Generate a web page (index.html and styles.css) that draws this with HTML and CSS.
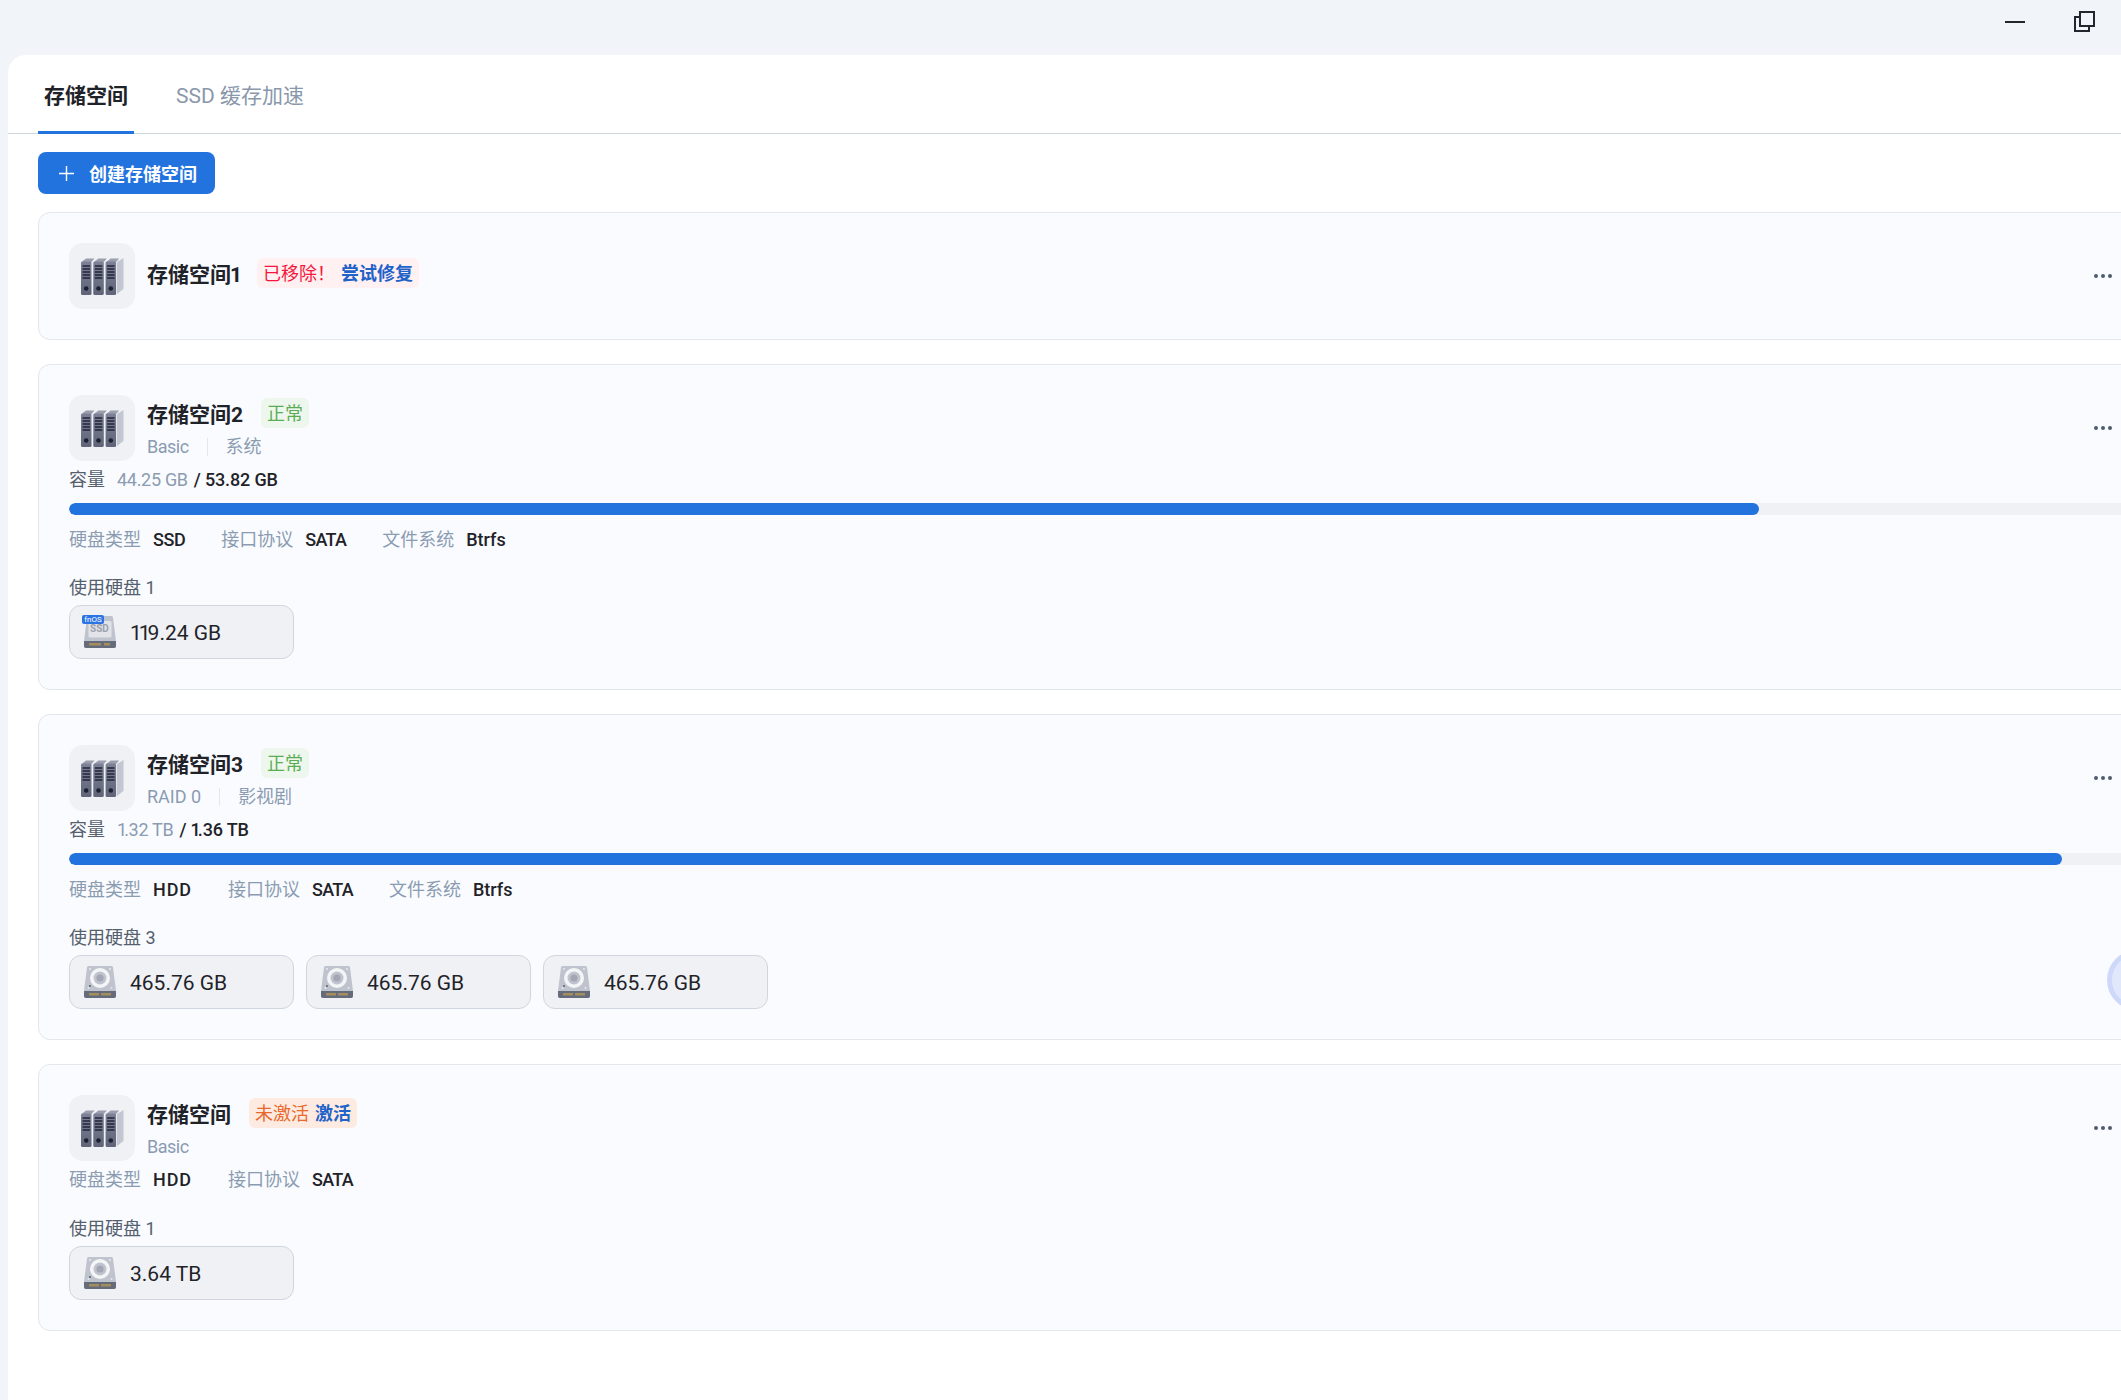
FILE: index.html
```html
<!DOCTYPE html>
<html lang="zh-CN">
<head>
<meta charset="utf-8">
<title>存储空间</title>
<link rel="stylesheet" href="styles.css">
</head>
<body>
<svg class="defs" width="0" height="0">
  <defs>
    <linearGradient id="binder" x1="0" y1="0" x2="0" y2="1"><stop offset="0" stop-color="#7d8296"/><stop offset="1" stop-color="#5f6478"/></linearGradient>
    <g id="one-binder">
      <path d="M0 6.5 5 2.5H13.5L10 6.5Z" fill="#9a9eae"/>
      <rect x="0" y="5.5" width="10.5" height="33.5" rx="1.5" fill="url(#binder)"/>
      <path d="M1.5 10h7.5M1.5 13h7.5M1.5 16h7.5M1.5 19h7.5M1.5 22h7.5" stroke="#23263a" stroke-width="1.5"/>
      <circle cx="5.2" cy="32.5" r="2.3" fill="#1d2030"/>
    </g>
    <symbol id="server" viewBox="0 0 43 40">
      <path d="M36 6 42.5 2V33L36 38Z" fill="#c3c7d1"/>
      <use href="#one-binder"/>
      <use href="#one-binder" x="12.3"/>
      <use href="#one-binder" x="24.6"/>
    </symbol>
    <symbol id="drive-base" viewBox="0 0 32 32">
      <path d="M3 1.5Q3 0 4.5 0H27.5Q29 0 29 1.5L32 25V30Q32 32 30 32H2Q0 32 0 30V25Z" fill="#bfc3cd"/>
      <path d="M0 25H32V30Q32 32 30 32H2Q0 32 0 30Z" fill="#666b7c"/>
    </symbol>
    <symbol id="hdd" viewBox="0 0 32 32">
      <use href="#drive-base" width="32" height="32"/>
      <circle cx="16" cy="12" r="10" fill="#f4f5f7"/>
      <circle cx="16" cy="12" r="6.5" fill="#bfc3cd"/>
      <circle cx="16" cy="12" r="3.6" fill="#a3a7b4"/>
      <circle cx="6" cy="20" r="0.9" fill="#50545f"/>
      <circle cx="6" cy="3" r="1" fill="#e6e8ec"/><circle cx="26" cy="3" r="1" fill="#e6e8ec"/>
      <circle cx="4.5" cy="22" r="1" fill="#e6e8ec"/><circle cx="27.5" cy="22" r="1" fill="#e6e8ec"/>
      <path d="M6 29.5V27M8 29.5V27M10 29.5V27M12 29.5V27M14 29.5V27M18 29.5V27M20 29.5V27M22 29.5V27M24 29.5V27M26 29.5V27" stroke="#e2b23a" stroke-width="1"/>
    </symbol>
    <symbol id="ssd" viewBox="0 0 32 32">
      <use href="#drive-base" width="32" height="32"/>
      <rect x="4.5" y="5" width="23" height="16.5" rx="1.5" fill="#e1e3e8"/>
      <path d="M6 29.5V27M8 29.5V27M10 29.5V27M12 29.5V27M14 29.5V27M16 29.5V27M21 29.5V27M23 29.5V27M25 29.5V27" stroke="#e2b23a" stroke-width="1"/>
    </symbol>
  </defs>
</svg>

<header class="titlebar">
  <svg class="win-min" width="20" height="2" viewBox="0 0 20 2"><rect width="20" height="2" fill="#22262e"/></svg>
  <svg class="win-restore" width="21" height="21" viewBox="0 0 21 21" fill="none" stroke="#22262e" stroke-width="2">
    <rect x="6" y="1" width="14" height="14" fill="#f1f4f9"/>
    <path d="M6 6H1V20H15V15"/>
  </svg>
</header>

<main class="panel">
  <nav class="tabs">
    <a class="tab tab-active">存储空间</a>
    <a class="tab">SSD 缓存加速</a>
  </nav>
  <div class="content">
    <button class="create-btn">
      <svg width="15" height="15" viewBox="0 0 15 15" stroke="#fff" stroke-width="1.4"><path d="M7.5 0V15M0 7.5H15"/></svg>
      <span>创建存储空间</span>
    </button>

    <section class="card">
      <div class="head head-solo">
        <span class="vol-icon"><svg width="43" height="40"><use href="#server"/></svg></span>
        <div class="head-text">
          <div class="title-row"><h2 class="title">存储空间<span class="narrow-one">1</span></h2><span class="tag tag-red">已移除！<a class="tag-link">尝试修复</a></span></div>
        </div>
        <span class="more"><i></i><i></i><i></i></span>
      </div>
    </section>

    <section class="card">
      <div class="head">
        <span class="vol-icon"><svg width="43" height="40"><use href="#server"/></svg></span>
        <div class="head-text">
          <div class="title-row"><h2 class="title">存储空间2</h2><span class="tag tag-green">正常</span></div>
          <div class="sub"><span class="tight-word">Basic</span><b class="sep"></b><span>系统</span></div>
        </div>
        <span class="more"><i></i><i></i><i></i></span>
      </div>
      <div class="capacity"><span class="cap-label">容量</span><span class="cap-used">44.25 GB</span><span class="cap-total">/ 53.82 GB</span></div>
      <div class="bar"><div class="bar-fill" style="width:82.3%"></div></div>
      <div class="specs">
        <span class="spec"><span class="spec-k">硬盘类型</span><span class="spec-v v-ssd">SSD</span></span>
        <span class="spec"><span class="spec-k">接口协议</span><span class="spec-v v-sata">SATA</span></span>
        <span class="spec"><span class="spec-k">文件系统</span><span class="spec-v">Btrfs</span></span>
      </div>
      <div class="used">使用硬盘 1</div>
      <div class="disks">
        <div class="disk">
          <span class="disk-icon"><svg width="32" height="32"><use href="#ssd"/></svg><span class="ssd-word">SSD</span><span class="fnos">fnOS</span></span>
          <span class="disk-size"><span class="narrow-ones">11</span>9.24 GB</span>
        </div>
      </div>
    </section>

    <section class="card">
      <div class="head">
        <span class="vol-icon"><svg width="43" height="40"><use href="#server"/></svg></span>
        <div class="head-text">
          <div class="title-row"><h2 class="title">存储空间3</h2><span class="tag tag-green">正常</span></div>
          <div class="sub"><span>RAID 0</span><b class="sep"></b><span>影视剧</span></div>
        </div>
        <span class="more"><i></i><i></i><i></i></span>
      </div>
      <div class="capacity"><span class="cap-label">容量</span><span class="cap-used"><span class="narrow-lead">1</span>.32 TB</span><span class="cap-total">/ <span class="narrow-lead">1</span>.36 TB</span></div>
      <div class="bar"><div class="bar-fill" style="width:97.05%"></div></div>
      <div class="specs">
        <span class="spec"><span class="spec-k">硬盘类型</span><span class="spec-v v-hdd">HDD</span></span>
        <span class="spec"><span class="spec-k">接口协议</span><span class="spec-v v-sata">SATA</span></span>
        <span class="spec"><span class="spec-k">文件系统</span><span class="spec-v">Btrfs</span></span>
      </div>
      <div class="used">使用硬盘 3</div>
      <div class="disks">
        <div class="disk"><span class="disk-icon"><svg width="32" height="32"><use href="#hdd"/></svg></span><span class="disk-size">465.76 GB</span></div>
        <div class="disk"><span class="disk-icon"><svg width="32" height="32"><use href="#hdd"/></svg></span><span class="disk-size">465.76 GB</span></div>
        <div class="disk"><span class="disk-icon"><svg width="32" height="32"><use href="#hdd"/></svg></span><span class="disk-size">465.76 GB</span></div>
      </div>
    </section>

    <section class="card">
      <div class="head">
        <span class="vol-icon"><svg width="43" height="40"><use href="#server"/></svg></span>
        <div class="head-text">
          <div class="title-row"><h2 class="title">存储空间</h2><span class="tag tag-orange">未激活<a class="tag-link">激活</a></span></div>
          <div class="sub"><span class="tight-word">Basic</span></div>
        </div>
        <span class="more"><i></i><i></i><i></i></span>
      </div>
      <div class="specs specs-tight">
        <span class="spec"><span class="spec-k">硬盘类型</span><span class="spec-v v-hdd">HDD</span></span>
        <span class="spec"><span class="spec-k">接口协议</span><span class="spec-v v-sata">SATA</span></span>
      </div>
      <div class="used">使用硬盘 1</div>
      <div class="disks">
        <div class="disk"><span class="disk-icon"><svg width="32" height="32"><use href="#hdd"/></svg></span><span class="disk-size">3.64 TB</span></div>
      </div>
    </section>
  </div>
</main>
<div class="float-ball"></div>
</body>
</html>
```
FILE: styles.css
```css
* { box-sizing: border-box; }
html, body { margin: 0; height: 100%; }
body {
  width: 2121px;
  height: 1400px;
  overflow: hidden;
  position: relative;
  background: #f1f4f9;
  color: #1f2329;
  font-family: Roboto, "Noto Sans CJK SC", sans-serif;
  font-size: 18px;
}
.defs { position: absolute; }
.titlebar {
  height: 55px;
  display: flex;
  justify-content: flex-end;
  align-items: flex-start;
  padding-right: 26px;
}
.win-min { margin-top: 21px; margin-right: 49px; }
.win-restore { margin-top: 11px; }
.panel {
  margin-left: 8px;
  width: 2200px;
  height: 1345px;
  background: #fff;
  border-top-left-radius: 18px;
}
.tabs {
  height: 79px;
  display: flex;
  gap: 36px;
  padding-left: 30px;
  border-bottom: 1px solid #cfd6e0;
}
.tab {
  height: 79px;
  padding: 0 6px 2px;
  display: flex;
  align-items: center;
  font-size: 21px;
  color: #8a98ab;
}
.tab-active {
  padding-top: 3px;
  color: #1f2329;
  font-weight: 700;
  border-bottom: 3px solid #2373df;
}
.content {
  padding: 18px 0 0 30px;
  display: flex;
  flex-direction: column;
  align-items: flex-start;
}
.create-btn {
  height: 42px;
  width: 177px;
  padding: 0 0 0 21px;
  display: flex;
  align-items: center;
  gap: 15px;
  border: 0;
  border-radius: 8px;
  background: #2373df;
  color: #fff;
  font: 700 18px Roboto, "Noto Sans CJK SC", sans-serif;
}
.card {
  width: 2116px;
  margin-top: 18px;
  padding: 30px;
  background: #fafbfe;
  border: 1px solid #e2e6ed;
  border-radius: 12px;
}
.card + .card { margin-top: 24px; }
.head { display: flex; align-items: flex-start; gap: 12px; height: 66px; }
.head-solo .head-text { padding-top: 15px; }
.vol-icon {
  width: 66px;
  height: 66px;
  flex: none;
  display: flex;
  align-items: center;
  justify-content: center;
  padding: 0 0 0 1px;
  background: #f0f1f4;
  border-radius: 14px;
}
.vol-icon svg { display: block; }
.head-text { flex: 1; padding-top: 3px; }
.title-row { display: flex; align-items: center; gap: 18px; height: 30px; }
.title { margin: 0; flex: none; padding-top: 4px; font-size: 21px; line-height: 30px; font-weight: 700; white-space: nowrap; }
.narrow-one { margin-left: -1px; margin-right: -3px; }
.narrow-ones { letter-spacing: -3px; }
.narrow-lead { letter-spacing: -3px; }
.tag {
  display: inline-flex;
  align-items: center;
  height: 30px;
  padding: 1px 6px 0;
  border-radius: 6px;
  line-height: 29px;
  white-space: nowrap;
}
.tag-red { background: #fff0f2; color: #f5163b; }
.tag-green { background: #eef7ee; color: #5aad54; }
.tag-orange { background: #fdeae0; color: #e8692c; }
.tag-link { margin-left: 6px; color: #1f62c8; font-weight: 700; }
.sub {
  margin-top: 7px;
  height: 24px;
  display: flex;
  align-items: center;
  gap: 18px;
  color: #8a9bb2;
  line-height: 24px;
}
.tight-word { letter-spacing: -0.5px; }
.sep { width: 1px; height: 18px; background: #e2e6ed; }
.more { display: flex; gap: 3px; margin: 31px 11px 0 0; }
.more i { width: 4px; height: 4px; border-radius: 50%; background: #4f5b6e; }
.capacity { margin-top: 6px; height: 24px; padding-top: 1px; line-height: 23px; display: flex; }
.cap-label { color: #555f6e; }
.cap-used { margin-left: 12px; color: #8a9bb2; letter-spacing: -0.3px; }
.cap-total { margin-left: 6px; font-weight: 500; letter-spacing: -0.15px; }
.bar { margin-top: 12px; height: 12px; background: #f0f1f4; border-radius: 6px 0 0 6px; overflow: hidden; }
.bar-fill { height: 12px; background: #2373df; border-radius: 6px; }
.specs { margin-top: 12px; height: 24px; padding-top: 1px; line-height: 23px; display: flex; gap: 36px; }
.specs-tight { margin-top: 6px; margin-bottom: 25px; }
.specs-tight + .used { margin-top: 0; }
.spec { display: flex; gap: 12px; }
.spec-k { color: #8a9bb2; }
.spec-v { font-weight: 500; }
.v-ssd { letter-spacing: -0.45px; }
.v-sata { letter-spacing: -0.7px; }
.v-hdd { letter-spacing: 0.9px; }
.used { margin-top: 24px; height: 24px; padding-top: 1px; line-height: 23px; color: #555f6e; }
.disks { margin-top: 6px; display: flex; gap: 12px; }
.disk {
  width: 225px;
  height: 54px;
  padding-left: 14px;
  display: flex;
  align-items: center;
  gap: 14px;
  font-size: 21px;
  line-height: 26px;
  background: #f0f1f4;
  border: 1px solid #cfd6e0;
  border-radius: 12px;
}
.disk-size { padding-top: 2px; }
.disk-icon { position: relative; width: 32px; height: 32px; display: block; }
.disk-icon svg { display: block; }
.fnos {
  position: absolute;
  left: -2px;
  top: -1px;
  height: 9px;
  width: 22px;
  background: #2b74e4;
  border-radius: 2px;
  color: #fff;
  font-size: 8px;
  line-height: 9px;
  text-align: center;
}
.ssd-word {
  position: absolute;
  left: 6px;
  top: 7px;
  color: #9da1ad;
  font: 700 10px/12px Roboto, sans-serif;
}
.float-ball {
  position: absolute;
  left: 2107px;
  top: 950px;
  width: 60px;
  height: 60px;
  border-radius: 50%;
  background: #e2e8fb;
  border: 5px solid #cdd8fb;
}
```
